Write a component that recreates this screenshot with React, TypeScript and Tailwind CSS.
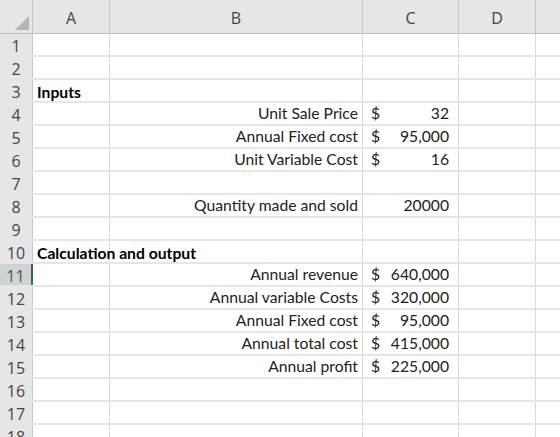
import React from "react";

const cols = [
  { key: "A", w: 77 },
  { key: "B", w: 253 },
  { key: "C", w: 96 },
  { key: "D", w: 77 },
];

type Row = { a?: string; b?: string; c?: string; cRaw?: string };

const rows: Row[] = [
  {},
  {},
  { a: "Inputs" },
  { b: "Unit Sale Price", c: "32" },
  { b: "Annual Fixed cost", c: "95,000" },
  { b: "Unit Variable Cost", c: "16" },
  {},
  { b: "Quantity made and sold", cRaw: "20000" },
  {},
  { a: "Calculation and output" },
  { b: "Annual revenue", c: "640,000" },
  { b: "Annual variable Costs", c: "320,000" },
  { b: "Annual Fixed cost", c: "95,000" },
  { b: "Annual total cost", c: "415,000" },
  { b: "Annual profit", c: "225,000" },
  {},
  {},
  {},
];

const cellFont = { fontFamily: "Lato, 'Open Sans', sans-serif" };
const headFont = { fontFamily: "'Open Sans', 'Noto Sans', sans-serif" };

export default function App() {
  return (
    <div className="w-[560px] h-[437px] overflow-hidden bg-white">
      <div className="flex h-[34px] bg-[#e6e6e6] border-b border-[#bdbdbd] overflow-hidden">
        <div className="w-[33px] shrink-0 border-r border-[#c8c8c8] relative">
          <svg className="absolute right-[3px] bottom-[3px]" width="14" height="14" viewBox="0 0 14 14">
            <polygon points="14,0 14,14 0,14" fill="#b4b4b4" />
          </svg>
        </div>
        {cols.map((c) => (
          <div
            key={c.key}
            style={{ width: c.w, ...headFont }}
            className="shrink-0 border-r border-[#c8c8c8] flex items-center justify-center pt-[3px] text-[16px] text-[#444]"
          >
            {c.key}
          </div>
        ))}
        <div className="flex-1" />
      </div>
      {rows.map((r, i) => {
        const sel = i === 10;
        return (
          <div key={i} className="flex h-[23px] border-b-2 border-[#e6e6e6] box-border">
            <div
              style={headFont}
              className={
                "w-[33px] shrink-0 flex items-center justify-center text-[16px] leading-none pt-[2px] " +
                (sel
                  ? "bg-[#d2d2d2] text-[#217346] border-r-2 border-[#217346]"
                  : "bg-[#e6e6e6] text-[#444] border-r border-[#c8c8c8]")
              }
            >
              {i + 1}
            </div>
            <div
              style={{ width: 77, ...cellFont }}
              className="shrink-0 border-r border-[#d9d9d9] relative"
            >
              {r.a && (
                <span className="absolute left-[4px] top-[1px] whitespace-nowrap text-[15.7px] font-bold text-black">
                  {r.a}
                </span>
              )}
            </div>
            <div
              style={{ width: 253, ...cellFont }}
              className="shrink-0 border-r border-[#d9d9d9] flex items-center justify-end pr-[4px] text-[15.7px] text-[#222]"
            >
              {r.b}
            </div>
            <div
              style={{ width: 96, ...cellFont }}
              className="shrink-0 border-r border-[#d9d9d9] flex items-center text-[15.7px] text-[#222]"
            >
              {r.c && (
                <>
                  <span className="pl-[8px]">$</span>
                  <span className="ml-auto pr-[9px]">{r.c}</span>
                </>
              )}
              {r.cRaw && <span className="ml-auto pr-[9px]">{r.cRaw}</span>}
            </div>
            <div style={{ width: 77 }} className="shrink-0 border-r border-[#d9d9d9]" />
            <div className="flex-1" />
          </div>
        );
      })}
    </div>
  );
}
